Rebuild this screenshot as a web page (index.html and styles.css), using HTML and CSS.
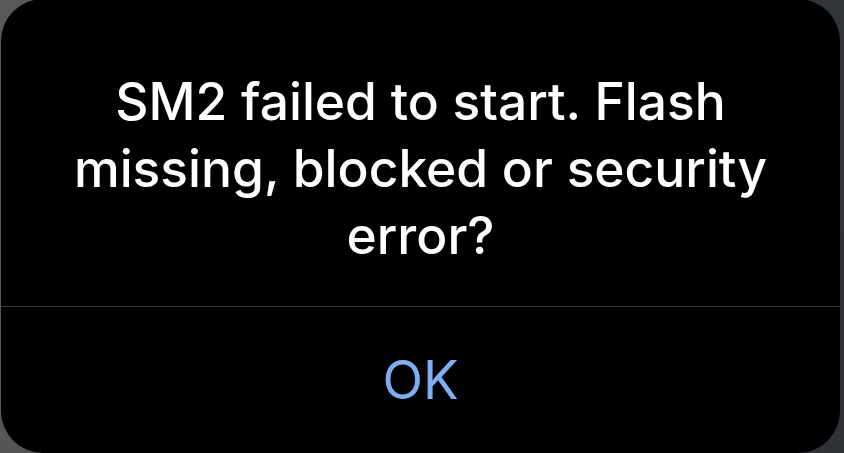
FILE: index.html
```html
<!DOCTYPE html>
<html>

<head>
    <title>Alert</title>
    <link rel="stylesheet" href="styles.css">
</head>

<body>
    <div class="alert">
        <div class="alert-message">
            <p>SM2 failed to start. Flash missing, blocked or security error?</p>
        </div>
        <button class="alert-btn">OK</button>
    </div>
</body>

</html>
```

FILE: styles.css
```css
* {
    margin: 0;
    box-sizing: border-box;
}

body {
    background: linear-gradient(100deg, #5a5a5a 0%, #3c3f44 60%, #2e3136 100%);
    height: 453px;
    overflow: hidden;
    padding-left: 1px;
    font-family: Inter, "Noto Sans", sans-serif;
}

.alert {
    width: 839px;
    height: 454px;
    margin-top: -1px;
    background-color: #000;
    border-radius: 42px;
    display: flex;
    flex-direction: column;
}

.alert-message {
    height: 308px;
    padding: 69px 40px 0;
    border-bottom: 1px solid #3a3a3c;
    text-align: center;
}

.alert-message p {
    color: #fff;
    font-size: 51.5px;
    font-weight: 500;
    line-height: 67px;
}

.alert-btn {
    flex: 1;
    background: transparent;
    border: none;
    color: #7eaef2;
    font-family: inherit;
    font-size: 53px;
    font-weight: 400;
    padding-bottom: 2px;
}
```
